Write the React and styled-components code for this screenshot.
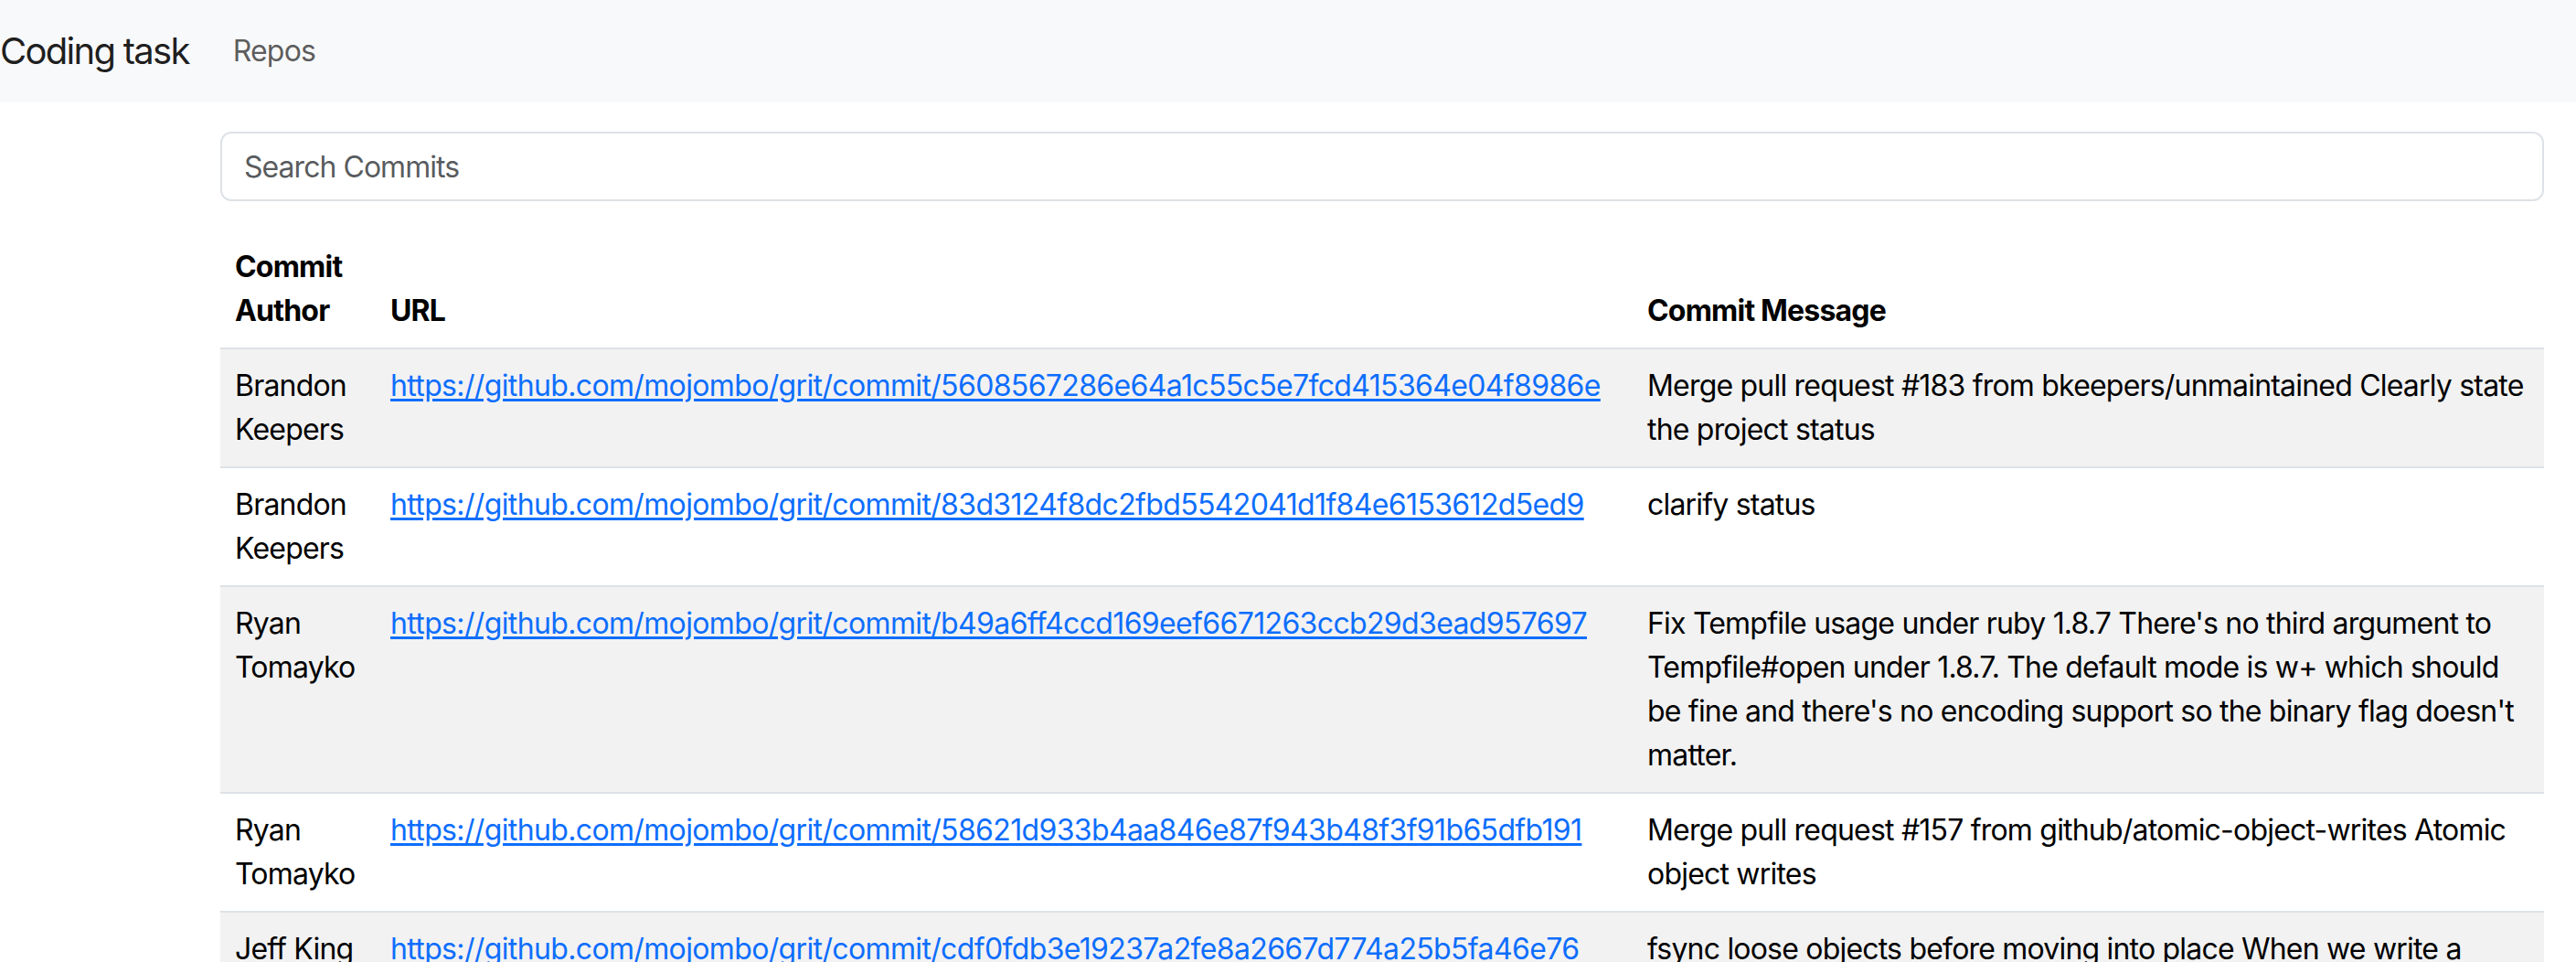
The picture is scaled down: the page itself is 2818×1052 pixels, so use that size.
import React from 'react'
import styled, { createGlobalStyle } from 'styled-components'

const GlobalStyle = createGlobalStyle`
  body {
    margin: 0;
    background: #ffffff;
    font-family: Inter, "Liberation Sans", sans-serif;
    font-size: 32px;
    line-height: 48px;
    letter-spacing: -0.025em;
    color: #000000;
  }
  * { box-sizing: border-box; }
`

const Navbar = styled.nav`
  display: flex;
  align-items: center;
  height: 112px;
  padding: 16px 0;
  background-color: #f8f9fa;
`

const Brand = styled.a`
  padding: 10px 0;
  margin-right: 32px;
  font-size: 40px;
  line-height: 60px;
  letter-spacing: -0.043em;
  color: rgba(0, 0, 0, 0.9);
  text-decoration: none;
`

const NavLink = styled.a`
  padding: 16px;
  font-size: 32px;
  line-height: 48px;
  color: rgba(0, 0, 0, 0.65);
  text-decoration: none;
`

const Main = styled.main`
  margin: 0 35px 0 241px;
  padding-top: 32px;
`

const Search = styled.input`
  display: block;
  width: 100%;
  height: 76px;
  margin-bottom: 32px;
  padding: 12px 24px;
  font-family: inherit;
  font-size: 32px;
  line-height: 48px;
  letter-spacing: -0.03em;
  color: #212529;
  background: #fff;
  border: 2px solid #dee2e6;
  border-radius: 12px;
  outline: none;

  &::placeholder {
    color: rgba(33, 37, 41, 0.75);
  }
`

const Table = styled.table`
  width: 100%;
  table-layout: fixed;
  border-collapse: collapse;
`

const Th = styled.th`
  padding: 16px;
  text-align: left;
  vertical-align: bottom;
  font-weight: 700;
  border-bottom: 2px solid #dee2e6;
`

const Row = styled.tr`
  background-color: ${({ $striped }) => ($striped ? '#f2f2f2' : 'transparent')};
`

const Td = styled.td`
  padding: 16px;
  vertical-align: top;
  border-bottom: 2px solid #dee2e6;
`

const CommitLink = styled.a`
  color: #0d6efd;
  letter-spacing: -0.02em;
  text-decoration: underline;
  text-underline-offset: 3px;
`

const commits = [
  {
    author: 'Brandon Keepers',
    sha: '5608567286e64a1c55c5e7fcd415364e04f8986e',
    message: 'Merge pull request #183 from bkeepers/unmaintained Clearly state the project status',
  },
  {
    author: 'Brandon Keepers',
    sha: '83d3124f8dc2fbd5542041d1f84e6153612d5ed9',
    message: 'clarify status',
  },
  {
    author: 'Ryan Tomayko',
    sha: 'b49a6ff4ccd169eef6671263ccb29d3ead957697',
    message:
      "Fix Tempfile usage under ruby 1.8.7 There's no third argument to Tempfile#open under 1.8.7. The default mode is w+ which should be fine and there's no encoding support so the binary flag doesn't matter.",
  },
  {
    author: 'Ryan Tomayko',
    sha: '58621d933b4aa846e87f943b48f3f91b65dfb191',
    message: 'Merge pull request #157 from github/atomic-object-writes Atomic object writes',
  },
  {
    author: 'Jeff King',
    sha: 'cdf0fdb3e19237a2fe8a2667d774a25b5fa46e76',
    message:
      'fsync loose objects before moving into place When we write a loose object to disk, we first write to a temporary file and then rename it into place.',
  },
]

export default function App() {
  return (
    <>
      <GlobalStyle />
      <Navbar>
        <Brand href="#">Coding task</Brand>
        <NavLink href="#">Repos</NavLink>
      </Navbar>
      <Main>
        <Search placeholder="Search Commits" />
        <Table>
          <colgroup>
            <col style={{ width: 170 }} />
            <col style={{ width: 1375 }} />
            <col />
          </colgroup>
          <thead>
            <tr>
              <Th>Commit Author</Th>
              <Th>URL</Th>
              <Th>Commit Message</Th>
            </tr>
          </thead>
          <tbody>
            {commits.map((c, i) => {
              const url = `https://github.com/mojombo/grit/commit/${c.sha}`
              return (
                <Row key={c.sha} $striped={i % 2 === 0}>
                  <Td>{c.author}</Td>
                  <Td>
                    <CommitLink href={url}>{url}</CommitLink>
                  </Td>
                  <Td>{c.message}</Td>
                </Row>
              )
            })}
          </tbody>
        </Table>
      </Main>
    </>
  )
}
